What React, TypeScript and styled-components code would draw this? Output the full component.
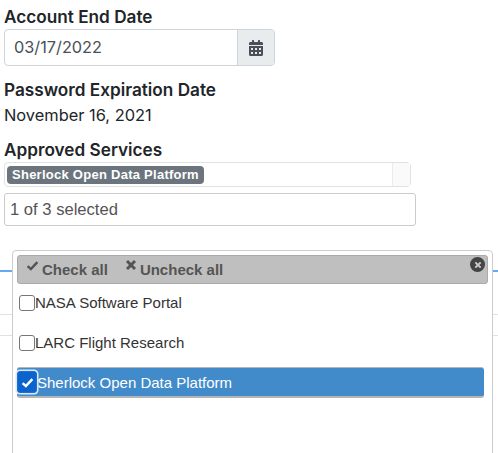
import React from 'react';
import styled, { createGlobalStyle } from 'styled-components';

const GlobalStyle = createGlobalStyle`
  html, body {
    margin: 0;
    padding: 0;
    background: #fff;
  }
  body {
    width: 498px;
    height: 453px;
    overflow: hidden;
    font-family: Inter, "Liberation Sans", sans-serif;
    color: #212529;
  }
`;

const services = [
  { name: 'NASA Software Portal', checked: false },
  { name: 'LARC Flight Research', checked: false },
  { name: 'Sherlock Open Data Platform', checked: true },
];

const CalendarIcon = () => (
  <svg width="14" height="16" viewBox="0 0 448 512" fill="#495057">
    <path d="M0 464c0 26.500 21.500 48 48 48h352c26.500 0 48-21.500 48-48V192H0v272zm320-196c0-6.600 5.400-12 12-12h40c6.600 0 12 5.400 12 12v40c0 6.600-5.400 12-12 12h-40c-6.600 0-12-5.400-12-12v-40zm0 128c0-6.600 5.400-12 12-12h40c6.600 0 12 5.400 12 12v40c0 6.600-5.400 12-12 12h-40c-6.600 0-12-5.400-12-12v-40zM192 268c0-6.600 5.400-12 12-12h40c6.600 0 12 5.400 12 12v40c0 6.600-5.400 12-12 12h-40c-6.600 0-12-5.400-12-12v-40zm0 128c0-6.600 5.400-12 12-12h40c6.600 0 12 5.400 12 12v40c0 6.600-5.400 12-12 12h-40c-6.600 0-12-5.400-12-12v-40zM64 268c0-6.600 5.400-12 12-12h40c6.600 0 12 5.400 12 12v40c0 6.600-5.400 12-12 12H76c-6.600 0-12-5.400-12-12v-40zm0 128c0-6.600 5.400-12 12-12h40c6.600 0 12 5.400 12 12v40c0 6.600-5.400 12-12 12H76c-6.600 0-12-5.400-12-12v-40zM400 64h-48V16c0-8.800-7.200-16-16-16h-32c-8.800 0-16 7.200-16 16v48H160V16c0-8.800-7.200-16-16-16h-32c-8.800 0-16 7.200-16 16v48H48C21.500 64 0 85.500 0 112v48h448v-48c0-26.500-21.500-48-48-48z" />
  </svg>
);

const CheckGlyph = ({ color = '#555', size = 13 }: { color?: string; size?: number }) => (
  <svg width={size} height={size} viewBox="0 0 12 12">
    <path d="M1.500 6.500 L4.500 9.300 L10.500 2.800" fill="none" stroke={color} strokeWidth="2.300" />
  </svg>
);

const CrossGlyph = ({ color = '#555', size = 12 }: { color?: string; size?: number }) => (
  <svg width={size} height={size} viewBox="0 0 12 12">
    <path d="M2 2 L10 10 M10 2 L2 10" fill="none" stroke={color} strokeWidth="3" />
  </svg>
);

export default function App() {
  return (
    <Page>
      <GlobalStyle />
      <FieldLabel>Account End Date</FieldLabel>
      <DateGroup>
        <DateValue>03/17/2022</DateValue>
        <DateAddon>
          <CalendarIcon />
        </DateAddon>
      </DateGroup>

      <FieldLabel $gap={12}>Password Expiration Date</FieldLabel>
      <StaticValue>November 16, 2021</StaticValue>

      <FieldLabel $gap={11}>Approved Services</FieldLabel>
      <ChipBox>
        <ChipArea>
          <Chip>Sherlock Open Data Platform</Chip>
        </ChipArea>
        <ChipScroll />
      </ChipBox>
      <SearchBox>1 of 3 selected</SearchBox>

      <BackdropLines>
        <BlueLine />
        <GrayLine $top={44} />
        <GrayLine $top={65} />
      </BackdropLines>

      <Menu>
        <MenuHeader>
          <HeaderLink>
            <CheckGlyph />
            Check all
          </HeaderLink>
          <HeaderLink>
            <CrossGlyph />
            Uncheck all
          </HeaderLink>
          <CloseButton>
            <CrossGlyph color="#c9c9c9" size={8} />
          </CloseButton>
        </MenuHeader>
        <OptionList>
          {services.map((service) => (
            <Option key={service.name} $checked={service.checked}>
              <Box $checked={service.checked}>
                {service.checked && <CheckGlyph color="#fff" size={13} />}
              </Box>
              {service.name}
            </Option>
          ))}
        </OptionList>
      </Menu>
    </Page>
  );
}

const Page = styled.div`
  position: relative;
  width: 498px;
  height: 453px;
  overflow: hidden;
  padding: 5px 0 0 4px;
  box-sizing: border-box;
`;

const FieldLabel = styled.div<{ $gap?: number }>`
  margin-top: ${(p) => p.$gap ?? 0}px;
  height: 24px;
  line-height: 24px;
  font-size: 17.200px;
  font-weight: 600;
  color: #212529;
`;

const DateGroup = styled.div`
  display: flex;
  width: 271px;
  height: 37px;
  box-sizing: border-box;
  border: 1px solid #ced4da;
  border-radius: 4px;
  overflow: hidden;
`;

const DateValue = styled.div`
  flex: 1;
  padding-left: 9px;
  line-height: 35px;
  font-size: 16.300px;
  color: #495057;
`;

const DateAddon = styled.div`
  display: flex;
  align-items: center;
  justify-content: center;
  width: 36px;
  background: #e9ecef;
  border-left: 1px solid #ced4da;
`;

const StaticValue = styled.div`
  margin-top: 1px;
  height: 24px;
  line-height: 24px;
  font-size: 16.400px;
  color: #212529;
`;

const ChipBox = styled.div`
  display: flex;
  width: 407px;
  height: 25px;
  box-sizing: border-box;
  border: 1px solid #dfe1e5;
  border-radius: 4px;
`;

const ChipArea = styled.div`
  flex: 1;
  display: flex;
  align-items: center;
  padding-left: 2px;
`;

const Chip = styled.span`
  display: inline-block;
  height: 18px;
  line-height: 18px;
  padding: 0 5px;
  border-radius: 4px;
  background: #6c757d;
  color: #fff;
  font-family: "Liberation Sans", Arial, sans-serif;
  font-size: 13px;
  font-weight: 700;
  letter-spacing: 0.260px;
`;

const ChipScroll = styled.div`
  width: 17px;
  background: #fafafa;
  border-left: 1px solid #ebebeb;
`;

const SearchBox = styled.div`
  margin-top: 6px;
  width: 412px;
  height: 33px;
  box-sizing: border-box;
  border: 1px solid #ccc;
  border-radius: 3px;
  padding-left: 5px;
  line-height: 31px;
  font-family: "Liberation Sans", Arial, sans-serif;
  font-size: 16.600px;
  color: #555;
`;

const BackdropLines = styled.div`
  position: absolute;
  left: 0;
  right: 0;
  top: 270px;
  height: 70px;
`;

const BlueLine = styled.div`
  height: 2px;
  background: #63a9f5;
`;

const GrayLine = styled.div<{ $top: number }>`
  position: absolute;
  left: 0;
  right: 0;
  top: ${(p) => p.$top}px;
  height: 1px;
  background: #dee2e6;
`;

const Menu = styled.div`
  position: absolute;
  left: 12px;
  top: 250px;
  width: 481px;
  height: 220px;
  box-sizing: border-box;
  padding: 4px;
  background: #fff;
  border: 1px solid #ccc;
  border-radius: 4px;
  font-family: "Liberation Sans", Arial, sans-serif;
`;

const MenuHeader = styled.div`
  position: relative;
  display: flex;
  align-items: center;
  gap: 17px;
  height: 29px;
  width: 471px;
  box-sizing: border-box;
  padding: 0 0 0 8px;
  background: #bfbfbf;
  border: 1px solid #aaa;
  border-radius: 3px;
`;

const HeaderLink = styled.span`
  display: inline-flex;
  align-items: flex-start;
  gap: 3px;
  color: #555;
  font-size: 15px;
  font-weight: 700;
  line-height: 18px;

  & > svg {
    margin-top: -2px;
  }
`;

const CloseButton = styled.span`
  position: absolute;
  right: 2px;
  top: 1px;
  display: flex;
  align-items: center;
  justify-content: center;
  width: 15px;
  height: 15px;
  border-radius: 50%;
  background: #444;
`;

const OptionList = styled.div`
  display: flex;
  flex-direction: column;
  gap: 9px;
  margin-top: 3px;
  width: 467px;
`;

const Option = styled.label<{ $checked: boolean }>`
  display: flex;
  align-items: center;
  height: 31px;
  box-sizing: border-box;
  padding-left: ${(p) => (p.$checked ? 0 : 2)}px;
  border-radius: 3px;
  font-size: 15px;
  color: ${(p) => (p.$checked ? '#fff' : '#333')};
  background: ${(p) => (p.$checked ? '#428bca' : 'transparent')};
  border: ${(p) => (p.$checked ? '1px solid #b5b5b5' : 'none')};
  border-width: ${(p) => (p.$checked ? '1px 0 2px 0' : '0')};
`;

const Box = styled.span<{ $checked: boolean }>`
  position: relative;
  z-index: 1;
  display: flex;
  align-items: center;
  justify-content: center;
  width: ${(p) => (p.$checked ? 20 : 16)}px;
  height: ${(p) => (p.$checked ? 22 : 16)}px;
  box-sizing: border-box;
  border-radius: 3px;
  border: 1px solid #767676;
  background: #fff;
  ${(p) =>
    p.$checked &&
    `
    background: #0b63ce;
    border: 1px solid #1f6fd6;
    box-shadow: 0 0 0 1.500px #dbe9f7;
  `}
`;
